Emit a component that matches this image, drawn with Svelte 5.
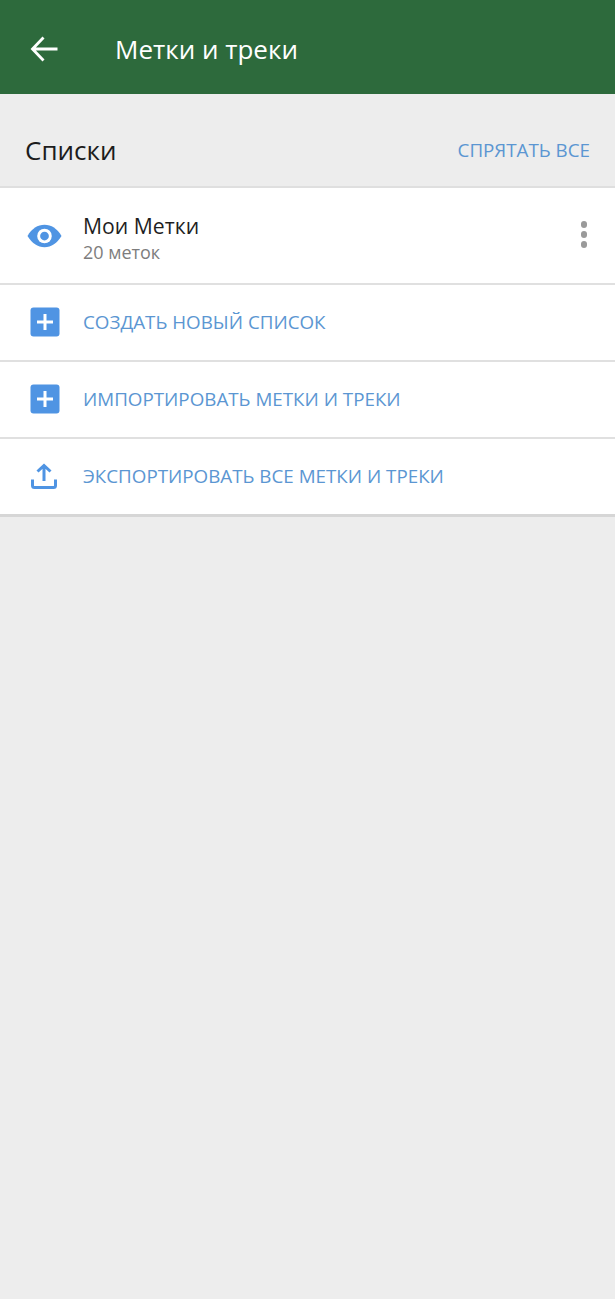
<script>
  const actions = [
    { label: 'СОЗДАТЬ НОВЫЙ СПИСОК', icon: 'plus' },
    { label: 'ИМПОРТИРОВАТЬ МЕТКИ И ТРЕКИ', icon: 'plus' },
    { label: 'ЭКСПОРТИРОВАТЬ ВСЕ МЕТКИ И ТРЕКИ', icon: 'upload' }
  ];
</script>

<div class="page">
  <header class="bar">
    <svg class="back" width="28" height="28" viewBox="0 0 28 28" fill="none" stroke="#fff" stroke-width="2.8">
      <path d="M2.500 14H27.500M13.500 2.500L2.500 14l11 11.500" />
    </svg>
    <h1>Метки и треки</h1>
  </header>

  <section class="head">
    <h2>Списки</h2>
    <span class="hide">СПРЯТАТЬ ВСЕ</span>
  </section>

  <div class="list">
    <div class="row main">
      <div class="ico">
        <svg width="35" height="24" viewBox="0 0 36 24">
          <path d="M0.500 12C5 4.500 11 0.500 18 0.500S31 4.500 35.500 12C31 19.500 25 23.500 18 23.500S5 19.500 0.500 12Z" fill="#4f94e3" />
          <circle cx="18" cy="12" r="7.500" fill="#fff" />
          <circle cx="18" cy="12" r="4.500" fill="#4f94e3" />
        </svg>
      </div>
      <div class="txt">
        <div class="name">Мои Метки</div>
        <div class="sub">20 меток</div>
      </div>
      <div class="dots"><i></i><i></i><i></i></div>
    </div>
    {#each actions as a}
      <div class="row act">
        <div class="ico">
          {#if a.icon === 'plus'}
            <svg width="30" height="30" viewBox="0 0 30 30">
              <rect width="29" height="29" x="0.500" y="0.500" rx="3" fill="#4f94e3" />
              <path d="M15 7v16M7 15h16" stroke="#fff" stroke-width="3" />
            </svg>
          {:else}
            <svg class="up" width="26" height="26" viewBox="0 0 26 26" fill="none" stroke="#4f94e3" stroke-width="3">
              <path d="M13 18V3M6.500 8.500L13 2.500l6.500 6" />
              <path d="M1.500 16.500v6a2 2 0 0 0 2 2h19a2 2 0 0 0 2-2v-6" />
            </svg>
          {/if}
        </div>
        <span class="label">{a.label}</span>
      </div>
    {/each}
  </div>
</div>

<style>
  :global(body) { margin: 0; }
  .page {
    width: 615px;
    height: 1299px;
    background: #ededed;
    font-family: "Open Sans", "Noto Sans", sans-serif;
    overflow: hidden;
  }
  .bar {
    height: 94px;
    background: #2d6a3c;
    display: flex;
    align-items: center;
    padding: 4px 0 0 30px;
    box-sizing: border-box;
  }
  .back { flex: none; }
  h1 {
    margin: 0 0 0 57px;
    font-size: 26px;
    font-weight: 400;
    color: #fff;
  }
  .head {
    height: 92px;
    display: flex;
    align-items: center;
    justify-content: space-between;
    padding: 20px 25px 0;
    box-sizing: border-box;
  }
  h2 {
    margin: 0;
    font-size: 26px;
    font-weight: 400;
    color: #1c1c1c;
  }
  .hide { font-size: 18.800px; color: #5b96d2; }
  .list {
    background: #fff;
    border-top: 2px solid #dfdfdf;
    border-bottom: 3px solid #d6d6d6;
  }
  .row {
    display: flex;
    align-items: center;
    border-bottom: 2px solid #e0e0e0;
    box-sizing: border-box;
  }
  .row.main { height: 97px; }
  .row.act { height: 77px; padding-bottom: 2px; }
  .row.act:last-child { border-bottom: 0; height: 75px; padding-bottom: 1px; }
  .ico {
    width: 83px;
    flex: none;
    padding-left: 30px;
    box-sizing: border-box;
    display: flex;
    align-items: center;
  }
  .main .ico { padding-left: 27px; }
  .up { margin-left: 1px; }
  .txt { flex: 1; padding-top: 5px; }
  .name { font-size: 21.200px; line-height: 28px; color: #1f1f1f; }
  .sub { font-size: 18px; line-height: 24px; color: #7d7d7d; }
  .dots {
    width: 16px;
    margin-right: 23px;
    padding-bottom: 2px;
    display: flex;
    flex-direction: column;
    align-items: center;
    gap: 3.500px;
  }
  .dots i { width: 6.500px; height: 6.500px; border-radius: 50%; background: #9a9a9a; }
  .label { font-size: 18.800px; color: #5b96d2; }
</style>
